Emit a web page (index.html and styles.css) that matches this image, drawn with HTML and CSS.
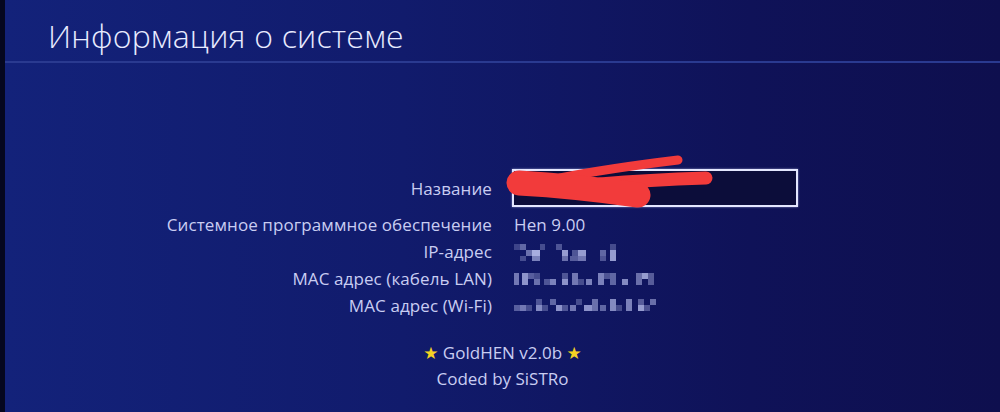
FILE: index.html
```html
<!DOCTYPE html>
<html lang="ru">
<head>
    <meta charset="UTF-8">
    <meta name="viewport" content="width=device-width, initial-scale=1.0">
    <title>Информация о системе</title>
    <link rel="stylesheet" href="styles.css">
</head>
<body>
    <div class="screen">
        <header class="page_header">
            <h1 class="page_title">Информация о системе</h1>
        </header>

        <main class="info">
            <div class="info_table">
                <div class="info_label">Название</div>
                <div class="info_value name_value">
                    <div class="name_box"></div>
                    <!-- red marker over the console name -->
                    <svg class="scribble" width="220" height="56" viewBox="0 0 220 56">
                        <path class="thin" d="M55 24 C95 16 140 10 173 6" />
                        <path class="mid" d="M95 30 C130 27 170 25 201 24" />
                        <path class="thick" d="M14 29 C50 31 90 35 133 41" />
                    </svg>
                </div>

                <div class="info_label">Системное программное обеспечение</div>
                <div class="info_value">Hen 9.00</div>

                <div class="info_label">IP-адрес</div>
                <div class="info_value">
                    <svg class="mosaic" width="104" height="20" viewBox="0 0 104 20">
                        <rect x="0" y="2" width="6" height="6" opacity=".25" />
                        <rect x="6" y="2" width="6" height="6" opacity=".45" />
                        <rect x="12" y="8" width="6" height="6" opacity=".5" />
                        <rect x="18" y="8" width="8" height="6" opacity=".85" />
                        <rect x="6" y="14" width="6" height="5" opacity=".3" />
                        <rect x="18" y="14" width="8" height="5" opacity=".6" />
                        <rect x="26" y="2" width="5" height="6" opacity=".3" />
                        <rect x="42" y="2" width="6" height="6" opacity=".35" />
                        <rect x="48" y="8" width="6" height="6" opacity=".75" />
                        <rect x="48" y="14" width="6" height="5" opacity=".5" />
                        <rect x="58" y="8" width="6" height="6" opacity=".35" />
                        <rect x="64" y="8" width="8" height="6" opacity=".75" />
                        <rect x="56" y="14" width="8" height="5" opacity=".4" />
                        <rect x="64" y="14" width="8" height="5" opacity=".55" />
                        <rect x="86" y="8" width="6" height="6" opacity=".45" />
                        <rect x="86" y="14" width="6" height="5" opacity=".35" />
                        <rect x="96" y="2" width="6" height="6" opacity=".3" />
                        <rect x="96" y="8" width="6" height="11" opacity=".75" />
                    </svg>
                </div>

                <div class="info_label">MAC адрес (кабель LAN)</div>
                <div class="info_value">
                    <svg class="mosaic" width="146" height="14" viewBox="0 0 146 14">
                        <rect x="0" y="1" width="5" height="12" opacity=".55" />
                        <rect x="8" y="1" width="6" height="12" opacity=".7" />
                        <rect x="14" y="1" width="6" height="6" opacity=".4" />
                        <rect x="20" y="1" width="6" height="6" opacity=".3" />
                        <rect x="20" y="7" width="6" height="6" opacity=".5" />
                        <rect x="30" y="7" width="6" height="6" opacity=".35" />
                        <rect x="36" y="7" width="6" height="6" opacity=".6" />
                        <rect x="48" y="1" width="6" height="6" opacity=".35" />
                        <rect x="48" y="7" width="6" height="6" opacity=".7" />
                        <rect x="58" y="1" width="6" height="12" opacity=".55" />
                        <rect x="64" y="7" width="6" height="6" opacity=".3" />
                        <rect x="72" y="7" width="6" height="6" opacity=".6" />
                        <rect x="84" y="1" width="6" height="12" opacity=".6" />
                        <rect x="90" y="1" width="6" height="6" opacity=".35" />
                        <rect x="96" y="1" width="6" height="12" opacity=".45" />
                        <rect x="108" y="7" width="6" height="6" opacity=".65" />
                        <rect x="122" y="1" width="6" height="12" opacity=".5" />
                        <rect x="128" y="1" width="6" height="6" opacity=".75" />
                        <rect x="134" y="1" width="6" height="12" opacity=".4" />
                    </svg>
                </div>

                <div class="info_label">MAC адрес (Wi-Fi)</div>
                <div class="info_value">
                    <svg class="mosaic" width="146" height="18" viewBox="0 0 146 18">
                        <rect x="0" y="8" width="6" height="6" opacity=".4" />
                        <rect x="6" y="8" width="6" height="6" opacity=".55" />
                        <rect x="12" y="8" width="6" height="6" opacity=".3" />
                        <rect x="22" y="2" width="6" height="6" opacity=".35" />
                        <rect x="22" y="8" width="6" height="6" opacity=".65" />
                        <rect x="28" y="8" width="6" height="6" opacity=".3" />
                        <rect x="36" y="2" width="6" height="6" opacity=".45" />
                        <rect x="42" y="8" width="6" height="6" opacity=".7" />
                        <rect x="48" y="8" width="6" height="6" opacity=".35" />
                        <rect x="56" y="8" width="6" height="6" opacity=".55" />
                        <rect x="62" y="2" width="6" height="6" opacity=".3" />
                        <rect x="70" y="8" width="8" height="6" opacity=".7" />
                        <rect x="78" y="2" width="6" height="12" opacity=".5" />
                        <rect x="86" y="8" width="6" height="6" opacity=".45" />
                        <rect x="96" y="2" width="6" height="12" opacity=".65" />
                        <rect x="102" y="8" width="6" height="6" opacity=".3" />
                        <rect x="112" y="2" width="6" height="12" opacity=".6" />
                        <rect x="124" y="2" width="6" height="6" opacity=".4" />
                        <rect x="124" y="8" width="6" height="6" opacity=".75" />
                        <rect x="130" y="8" width="6" height="6" opacity=".35" />
                        <rect x="136" y="2" width="6" height="6" opacity=".5" />
                    </svg>
                </div>
            </div>

            <div class="credits">
                <p><span class="star">★</span> GoldHEN v2.0b <span class="star">★</span></p>
                <p>Coded by SiSTRo</p>
            </div>
        </main>
    </div>
</body>
</html>
```

FILE: styles.css
```css
/* General */
*{
    font-family: "Open Sans", "DejaVu Sans", sans-serif;
    box-sizing: border-box;
}
html, body{
    margin: 0px;
    padding: 0px;
    height: 100%;
}
body{
    background-color: #05071f;
    overflow: hidden;
}
.screen{
    height: 412px;
    border-left: 5px solid #05071f;
    background: linear-gradient(90deg, #13227a 0%, #111b6c 40%, #0f1258 75%, #0e0f4e 100%);
    display: flex;
    flex-direction: column;
}

/* Header */
.page_header{
    height: 63px;
    border-bottom: 2px solid #2a3a90;
    display: flex;
    align-items: flex-end;
    padding-left: 43px;
    padding-bottom: 4px;
}
.page_title{
    margin: 0px;
    font-size: 32px;
    font-weight: 300;
    color: #e8ebff;
    letter-spacing: 0.2px;
}

/* Info table */
.info{
    padding-top: 102px;
    display: flex;
    flex-direction: column;
}
.info_table{
    display: grid;
    grid-template-columns: 487px 1fr;
    grid-template-rows: 46px repeat(4, 27px);
    column-gap: 13px;
}
.info_label, .info_value{
    display: flex;
    align-items: center;
    font-size: 17px;
    letter-spacing: 0.1px;
    color: #c9cdf2;
    white-space: nowrap;
}
.info_label{
    justify-content: flex-end;
}
.info_value{
    padding-left: 9px;
}
.name_value{
    position: relative;
    padding-left: 7px;
}
.name_box{
    width: 286px;
    height: 38px;
    border: 2px solid #e4e7ff;
    background-color: #0c0d3a;
    box-shadow: 0 0 2px rgba(220, 225, 255, 0.6);
}
.scribble{
    position: absolute;
    left: 0px;
    top: -11px;
}
.scribble path{
    fill: none;
    stroke: #f23b3b;
    stroke-linecap: round;
}
.scribble path.thin{
    stroke-width: 9;
}
.scribble path.mid{
    stroke-width: 13;
}
.scribble path.thick{
    stroke-width: 25;
}
.mosaic{
    fill: #c3c9f6;
    filter: blur(0.5px);
}

/* Credits */
.credits{
    margin-top: 21px;
    display: flex;
    flex-direction: column;
    align-items: center;
    font-size: 17px;
    color: #c9cdf2;
}
.credits p{
    margin: 0px;
    line-height: 25px;
}
.star{
    font-family: "DejaVu Sans", sans-serif;
    color: #f5d224;
    font-size: 17px;
}
```
